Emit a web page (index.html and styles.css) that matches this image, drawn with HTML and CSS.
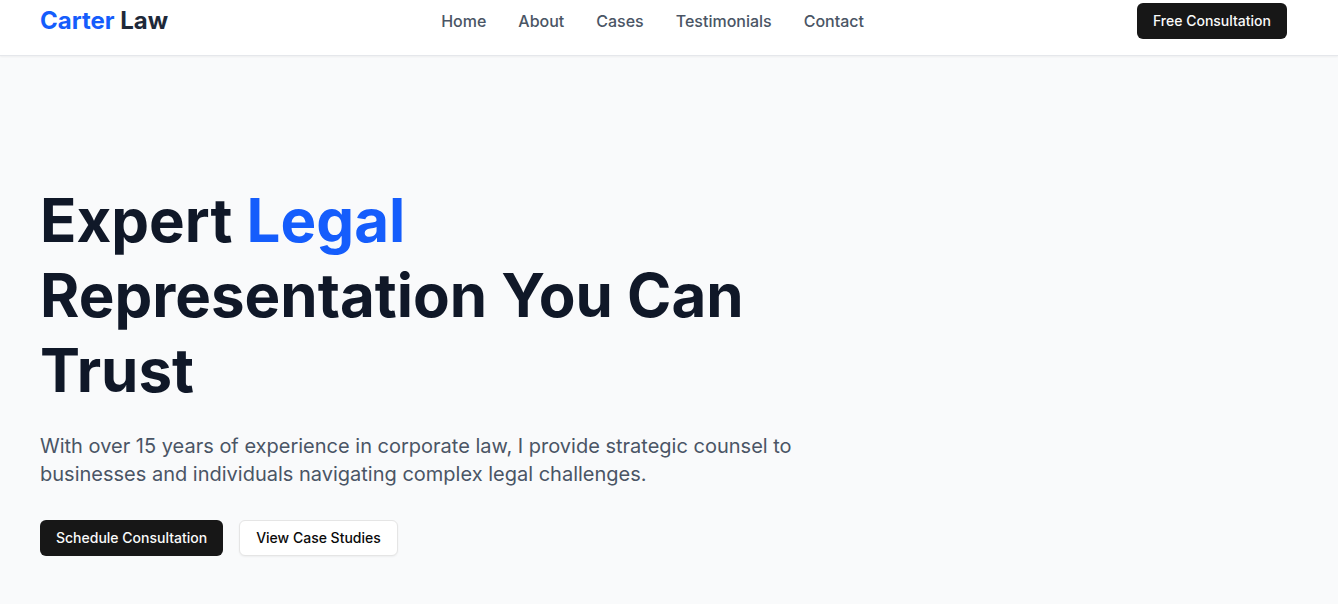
FILE: index.html
```html
<!DOCTYPE html>
<html lang="en">
<head>
<meta charset="utf-8">
<title>Carter Law</title>
<link rel="stylesheet" href="styles.css">
</head>
<body>
<header class="site-header">
  <div class="header-inner">
    <a class="logo" href="#"><span class="logo-accent">Carter</span> Law</a>
    <nav class="nav">
      <a href="#">Home</a>
      <a href="#">About</a>
      <a href="#">Cases</a>
      <a href="#">Testimonials</a>
      <a href="#">Contact</a>
    </nav>
    <a class="btn btn-dark" href="#">Free Consultation</a>
  </div>
</header>
<main class="hero">
  <div class="hero-inner">
    <h1 class="hero-title">Expert <span class="accent">Legal</span> Representation You Can Trust</h1>
    <p class="hero-text">With over 15 years of experience in corporate law, I provide strategic counsel to businesses and individuals navigating complex legal challenges.</p>
    <div class="hero-actions">
      <a class="btn btn-dark" href="#">Schedule Consultation</a>
      <a class="btn btn-outline" href="#">View Case Studies</a>
    </div>
  </div>
</main>
</body>
</html>
```

FILE: styles.css
```css
* { box-sizing: border-box; }
html, body { margin: 0; padding: 0; }
body {
  font-family: Inter, "Noto Sans", "Liberation Sans", sans-serif;
  color: #101828;
  background: #f9fafb;
  -webkit-font-smoothing: antialiased;
}
a { text-decoration: none; color: inherit; }

.site-header {
  background: #ffffff;
  border-bottom: 1px solid #e5e7eb;
  box-shadow: 0 1px 2px rgba(0,0,0,0.05);
  height: 56px;
}
.header-inner {
  height: 42px;
  padding: 0 51px 0 40px;
  display: flex;
  align-items: center;
  justify-content: space-between;
}
.logo {
  font-size: 24px;
  font-weight: 700;
  color: #1e2939;
  line-height: 32px;
}
.logo-accent { color: #155dfc; }
.nav {
  display: flex;
  gap: 32px;
}
.nav a {
  font-size: 16px;
  line-height: 24px;
  color: #4a5565;
  font-weight: 500;
}

.btn {
  display: inline-flex;
  align-items: center;
  justify-content: center;
  height: 36px;
  padding: 0 16px;
  border-radius: 6px;
  font-size: 14px;
  font-weight: 500;
  line-height: 20px;
  white-space: nowrap;
}
.btn-dark {
  background: #171717;
  color: #fafafa;
}
.btn-outline {
  background: #ffffff;
  color: #0a0a0a;
  border: 1px solid #e5e5e5;
  box-shadow: 0 1px 2px rgba(0,0,0,0.05);
}

.hero {
  min-height: 560px;
}
.hero-inner {
  padding: 127px 51px 64px 40px;
}
.hero-title {
  max-width: 768px;
  margin: 0;
  font-size: 60px;
  line-height: 75px;
  font-weight: 700;
  color: #101828;
}
.accent { color: #155dfc; }
.hero-text {
  max-width: 768px;
  margin: 24px 0 0;
  font-size: 20px;
  line-height: 28px;
  color: #4a5565;
}
.hero-actions {
  margin-top: 32px;
  display: flex;
  gap: 16px;
}
```
